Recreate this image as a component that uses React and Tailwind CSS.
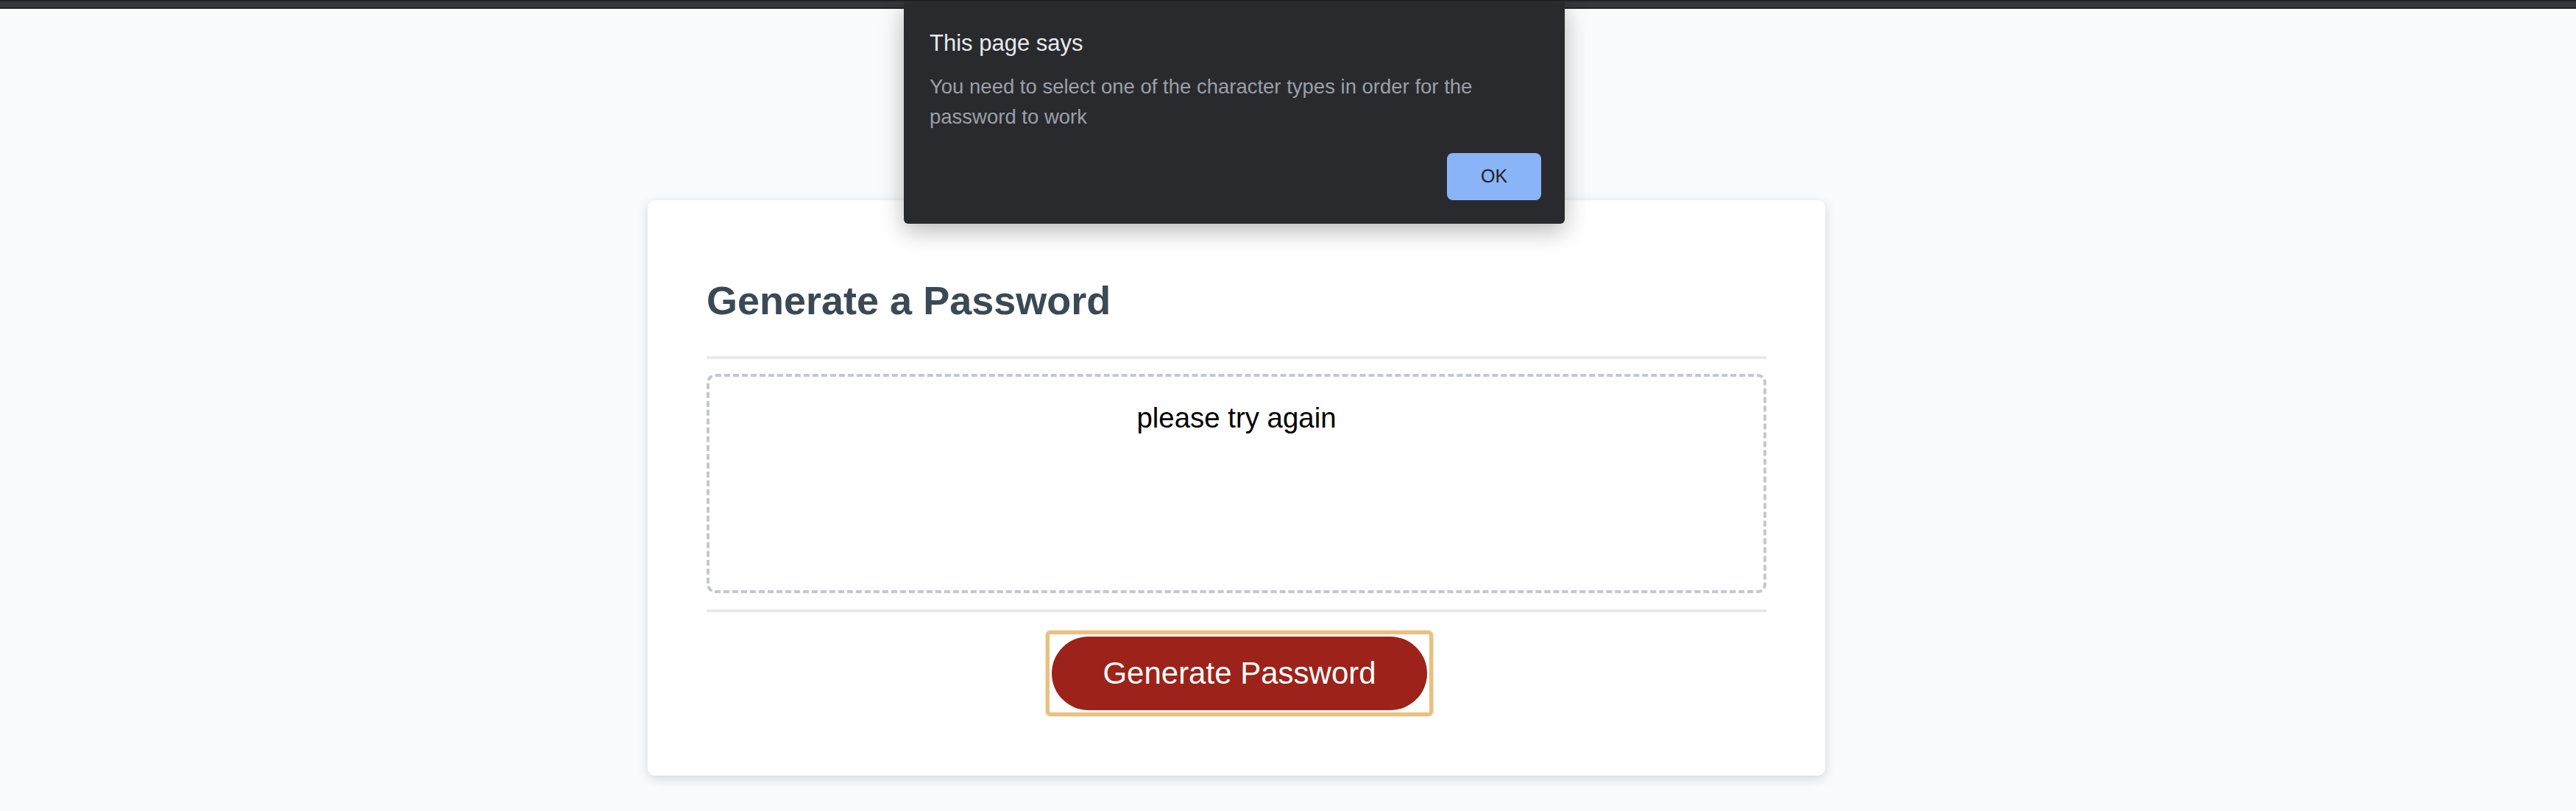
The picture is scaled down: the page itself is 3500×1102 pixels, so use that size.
import React, { useState } from "react";

const font = { fontFamily: '"Liberation Sans", Arial, sans-serif' };

const AlertDialog = ({ onClose }) => (
  <div
    className="absolute left-[1228px] top-[3px] w-[898px] rounded-b-[6px] bg-[#292a2e] pl-[35px] pr-[32px] pt-[36px] pb-[32px] shadow-[0_10px_32px_rgba(0,0,0,0.28)]"
    style={font}
  >
    <div className="text-[31px] leading-[40px] text-[#e8eaed]">This page says</div>
    <p className="mt-[18px] text-[27.5px] leading-[41px] text-[#9aa0a6]">
      You need to select one of the character types in order for the password
      to work
    </p>
    <div className="mt-[29px] flex justify-end">
      <button
        onClick={onClose}
        className="flex h-[64px] w-[128px] items-center justify-center rounded-[8px] bg-[#8ab4f8] text-[25px] text-[#202124]"
      >
        OK
      </button>
    </div>
  </div>
);

const App = () => {
  const [showAlert, setShowAlert] = useState(true);
  const [password] = useState("please try again");

  return (
    <div className="relative min-h-[1102px] w-full bg-[#f9fbfd]" style={font}>
      {/* browser chrome edge */}
      <div className="h-[12px] w-full border-y-2 border-[#202124] bg-[#35363a]" />

      <div className="w-[3360px] px-[40px] pt-[260px]">
        <div className="mx-auto w-[1600px] rounded-[10px] bg-white px-[80px] py-[60px] text-[#3b4954] shadow-[0_4px_16px_rgba(0,0,0,0.15)]">
          <div>
            <h2 className="my-[45px] text-[54px] font-bold leading-[62px]">
              Generate a Password
            </h2>
            <div className="h-[4px] w-full bg-[#e7e9eb]" />
          </div>

          <div>
            <textarea
              readOnly
              value={password}
              className="mt-[20px] mb-[22px] block h-[298px] w-full resize-none overflow-hidden rounded-[12px] border-4 border-dashed border-[#c4c8ce] px-[30px] pt-[34px] pb-[166px] text-center text-[38.4px] leading-[44px] text-black outline-none"
              style={font}
            />
          </div>

          <div>
            <div className="h-[4px] w-full bg-[#e7e9eb]" />
            <div className="flex justify-center">
              <div className="mt-[25px] mb-[21px] ml-[40px] mr-[32px] inline-flex rounded-[6px] border-[5px] border-[#e8c07f] p-[3px] shadow-[0_0_0_1px_#f5e2c2]">
                <button
                  className="rounded-full bg-[#9d2219] px-[69px] py-[28px] text-[42px] leading-[44px] text-white"
                  style={font}
                >
                  Generate Password
                </button>
              </div>
            </div>
          </div>
        </div>
      </div>

      {showAlert && <AlertDialog onClose={() => setShowAlert(false)} />}
    </div>
  );
};

export default App;
